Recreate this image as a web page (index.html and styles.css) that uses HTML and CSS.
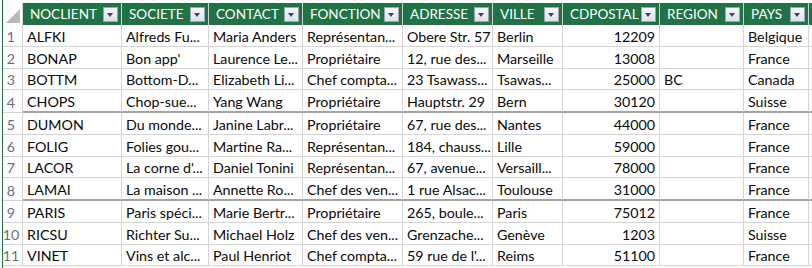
FILE: index.html
```html
<!DOCTYPE html>
<html>
<head>
<meta charset="utf-8">
<link rel="stylesheet" href="styles.css">
</head>
<body>
<div class="sheet">
  <div class="row head">
    <div class="cell corner"><svg class="tri" width="14" height="14" viewBox="0 0 14 14"><polygon points="14,0 14,14 0,14" fill="#b9b9b9"/></svg></div>
    <div class="cell hc"><span>NOCLIENT</span><span class="dd"></span></div>
    <div class="cell hc"><span>SOCIETE</span><span class="dd"></span></div>
    <div class="cell hc"><span>CONTACT</span><span class="dd"></span></div>
    <div class="cell hc"><span>FONCTION</span><span class="dd"></span></div>
    <div class="cell hc"><span>ADRESSE</span><span class="dd"></span></div>
    <div class="cell hc"><span>VILLE</span><span class="dd"></span></div>
    <div class="cell hc"><span>CDPOSTAL</span><span class="dd"></span></div>
    <div class="cell hc"><span>REGION</span><span class="dd"></span></div>
    <div class="cell hc"><span>PAYS</span><span class="dd"></span></div>
    <div class="cell hc last"></div>
  </div>

  <div class="row">
    <div class="cell num">1</div><div class="cell">ALFKI</div><div class="cell">Alfreds Fu...</div><div class="cell">Maria Anders</div><div class="cell">Représentan...</div><div class="cell">Obere Str. 57</div><div class="cell">Berlin</div><div class="cell r">12209</div><div class="cell"></div><div class="cell">Belgique</div><div class="cell last"></div>
  </div>
  <div class="row">
    <div class="cell num">2</div><div class="cell">BONAP</div><div class="cell">Bon app'</div><div class="cell">Laurence Le...</div><div class="cell">Propriétaire</div><div class="cell">12, rue des...</div><div class="cell">Marseille</div><div class="cell r">13008</div><div class="cell"></div><div class="cell">France</div><div class="cell last"></div>
  </div>
  <div class="row">
    <div class="cell num">3</div><div class="cell">BOTTM</div><div class="cell">Bottom-D...</div><div class="cell">Elizabeth Li...</div><div class="cell">Chef compta...</div><div class="cell">23 Tsawass...</div><div class="cell">Tsawas...</div><div class="cell r">25000</div><div class="cell">BC</div><div class="cell">Canada</div><div class="cell last"></div>
  </div>
  <div class="row brk">
    <div class="cell num">4</div><div class="cell">CHOPS</div><div class="cell">Chop-sue...</div><div class="cell">Yang Wang</div><div class="cell">Propriétaire</div><div class="cell">Hauptstr. 29</div><div class="cell">Bern</div><div class="cell r">30120</div><div class="cell"></div><div class="cell">Suisse</div><div class="cell last"></div>
  </div>
  <div class="row">
    <div class="cell num">5</div><div class="cell">DUMON</div><div class="cell">Du monde...</div><div class="cell">Janine Labr...</div><div class="cell">Propriétaire</div><div class="cell">67, rue des...</div><div class="cell">Nantes</div><div class="cell r">44000</div><div class="cell"></div><div class="cell">France</div><div class="cell last"></div>
  </div>
  <div class="row">
    <div class="cell num">6</div><div class="cell">FOLIG</div><div class="cell">Folies gou...</div><div class="cell">Martine Ra...</div><div class="cell">Représentan...</div><div class="cell">184, chauss...</div><div class="cell">Lille</div><div class="cell r">59000</div><div class="cell"></div><div class="cell">France</div><div class="cell last"></div>
  </div>
  <div class="row">
    <div class="cell num">7</div><div class="cell">LACOR</div><div class="cell">La corne d'...</div><div class="cell">Daniel Tonini</div><div class="cell">Représentan...</div><div class="cell">67, avenue...</div><div class="cell">Versaill...</div><div class="cell r">78000</div><div class="cell"></div><div class="cell">France</div><div class="cell last"></div>
  </div>
  <div class="row brk">
    <div class="cell num">8</div><div class="cell">LAMAI</div><div class="cell">La maison ...</div><div class="cell">Annette Ro...</div><div class="cell">Chef des ven...</div><div class="cell">1 rue Alsac...</div><div class="cell">Toulouse</div><div class="cell r">31000</div><div class="cell"></div><div class="cell">France</div><div class="cell last"></div>
  </div>
  <div class="row">
    <div class="cell num">9</div><div class="cell">PARIS</div><div class="cell">Paris spéci...</div><div class="cell">Marie Bertr...</div><div class="cell">Propriétaire</div><div class="cell">265, boule...</div><div class="cell">Paris</div><div class="cell r">75012</div><div class="cell"></div><div class="cell">France</div><div class="cell last"></div>
  </div>
  <div class="row">
    <div class="cell num">10</div><div class="cell">RICSU</div><div class="cell">Richter Su...</div><div class="cell">Michael Holz</div><div class="cell">Chef des ven...</div><div class="cell">Grenzache...</div><div class="cell">Genève</div><div class="cell r">1203</div><div class="cell"></div><div class="cell">Suisse</div><div class="cell last"></div>
  </div>
  <div class="row">
    <div class="cell num">11</div><div class="cell">VINET</div><div class="cell">Vins et alc...</div><div class="cell">Paul Henriot</div><div class="cell">Chef compta...</div><div class="cell">59 rue de l'...</div><div class="cell">Reims</div><div class="cell r">51100</div><div class="cell"></div><div class="cell">France</div><div class="cell last"></div>
  </div>
</div>
</body>
</html>
```

FILE: styles.css
```css
html, body {
  margin: 0;
  padding: 0;
  background: #ffffff;
}
body {
  font-family: Lato, "Liberation Sans", sans-serif;
  font-size: 14.25px;
  color: #0a0a0a;
  width: 812px;
  height: 268px;
  overflow: hidden;
}
.sheet {
  margin-left: 2px;
  border-left: 1px solid #217346;
  padding-top: 3px;
  height: 265px;
}
.row {
  display: grid;
  grid-template-columns: 20px 99px 87px 94px 100px 90px 70px 97px 84px 65px 1fr;
  height: 21.75px;
}
.row.brk {
  height: 22.75px;
}
.cell {
  box-sizing: border-box;
  border-right: 1px solid #d4d4d4;
  border-bottom: 1px solid #d4d4d4;
  padding: 0 4px 1px 4px;
  white-space: nowrap;
  overflow: hidden;
  display: flex;
  align-items: flex-end;
  line-height: 17px;
}
.cell.last {
  border-right: none;
}
.cell.r {
  justify-content: flex-end;
}
.cell.num {
  color: #6f6f6f;
  justify-content: center;
  padding: 0 3px 1px 0;
}
.row.brk .cell:not(.num) {
  border-bottom: 2px solid #a3a3a3;
}
.row.head {
  height: 22px;
}
.hc {
  background: #217346;
  color: #ffffff;
  font-size: 13.5px;
  border-right: 1px solid #c9d6cd;
  border-bottom: none;
  align-items: center;
  justify-content: space-between;
  padding: 0 3px 0 7px;
}
.hc.last {
  border-right: none;
}
.corner {
  background: #ffffff;
  border-bottom: none;
  padding: 0;
  align-items: flex-end;
  justify-content: flex-end;
}
.tri {
  display: block;
  margin: 0 2px 2px 0;
}
.dd {
  box-sizing: border-box;
  width: 15px;
  height: 15px;
  border: 1px solid #9aa4b8;
  background: linear-gradient(#f7f8fb, #dde2ec);
  position: relative;
  flex: none;
}
.dd::after {
  content: "";
  position: absolute;
  left: 3px;
  top: 5px;
  border-left: 3.5px solid transparent;
  border-right: 3.5px solid transparent;
  border-top: 4px solid #36456b;
}
```
